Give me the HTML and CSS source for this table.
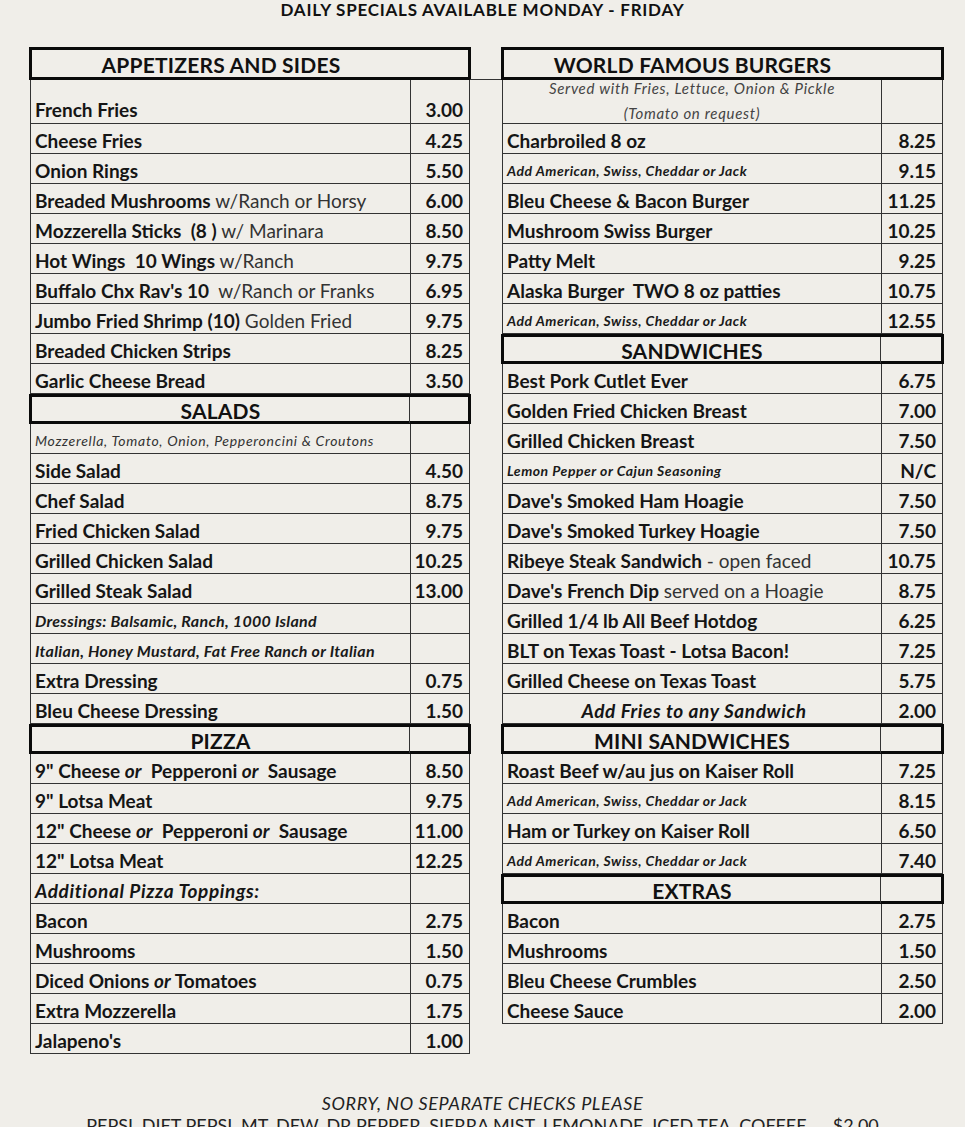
FILE: index.html
```html
<!DOCTYPE html>
<html>
<head>
<meta charset="utf-8">
<link rel="stylesheet" href="styles.css">
</head>
<body>
<div class="title">DAILY SPECIALS AVAILABLE MONDAY - FRIDAY</div>
<div class="menus">
  <div class="menu left">
    <div class="sec top"><div class="n">APPETIZERS AND SIDES</div></div>
    <div class="row tall"><div class="n"><b>French Fries</b></div><div class="p">3.00</div></div>
    <div class="row"><div class="n"><b>Cheese Fries</b></div><div class="p">4.25</div></div>
    <div class="row"><div class="n"><b>Onion Rings</b></div><div class="p">5.50</div></div>
    <div class="row"><div class="n"><b>Breaded Mushrooms</b>&nbsp;w/Ranch or Horsy</div><div class="p">6.00</div></div>
    <div class="row"><div class="n"><b>Mozzerella Sticks&nbsp; (8 )</b>&nbsp;w/ Marinara</div><div class="p">8.50</div></div>
    <div class="row"><div class="n"><b>Hot Wings&nbsp; 10 Wings</b>&nbsp;w/Ranch</div><div class="p">9.75</div></div>
    <div class="row"><div class="n"><b>Buffalo Chx Rav's 10</b>&nbsp; w/Ranch or Franks</div><div class="p">6.95</div></div>
    <div class="row"><div class="n"><b>Jumbo Fried Shrimp (10)</b>&nbsp;Golden Fried</div><div class="p">9.75</div></div>
    <div class="row"><div class="n"><b>Breaded Chicken Strips</b></div><div class="p">8.25</div></div>
    <div class="row"><div class="n"><b>Garlic Cheese Bread</b></div><div class="p">3.50</div></div>
    <div class="sec"><div class="n">SALADS</div><div class="p"></div></div>
    <div class="row"><div class="n desc">Mozzerella, Tomato, Onion, Pepperoncini &amp; Croutons</div><div class="p"></div></div>
    <div class="row"><div class="n"><b>Side Salad</b></div><div class="p">4.50</div></div>
    <div class="row"><div class="n"><b>Chef Salad</b></div><div class="p">8.75</div></div>
    <div class="row"><div class="n"><b>Fried Chicken Salad</b></div><div class="p">9.75</div></div>
    <div class="row"><div class="n"><b>Grilled Chicken Salad</b></div><div class="p">10.25</div></div>
    <div class="row"><div class="n"><b>Grilled Steak Salad</b></div><div class="p">13.00</div></div>
    <div class="row"><div class="n dress">Dressings: Balsamic, Ranch, 1000 Island</div><div class="p"></div></div>
    <div class="row"><div class="n dress">Italian, Honey Mustard, Fat Free Ranch or Italian</div><div class="p"></div></div>
    <div class="row"><div class="n"><b>Extra Dressing</b></div><div class="p">0.75</div></div>
    <div class="row"><div class="n"><b>Bleu Cheese Dressing</b></div><div class="p">1.50</div></div>
    <div class="sec"><div class="n">PIZZA</div><div class="p"></div></div>
    <div class="row"><div class="n"><b>9" Cheese <i>or</i>&nbsp; Pepperoni <i>or</i>&nbsp; Sausage</b></div><div class="p">8.50</div></div>
    <div class="row"><div class="n"><b>9" Lotsa Meat</b></div><div class="p">9.75</div></div>
    <div class="row"><div class="n"><b>12" Cheese <i>or</i>&nbsp; Pepperoni <i>or</i>&nbsp; Sausage</b></div><div class="p">11.00</div></div>
    <div class="row"><div class="n"><b>12" Lotsa Meat</b></div><div class="p">12.25</div></div>
    <div class="row"><div class="n bi">Additional Pizza Toppings:</div><div class="p"></div></div>
    <div class="row"><div class="n"><b>Bacon</b></div><div class="p">2.75</div></div>
    <div class="row"><div class="n"><b>Mushrooms</b></div><div class="p">1.50</div></div>
    <div class="row"><div class="n"><b>Diced Onions <i>or</i> Tomatoes</b></div><div class="p">0.75</div></div>
    <div class="row"><div class="n"><b>Extra Mozzerella</b></div><div class="p">1.75</div></div>
    <div class="row"><div class="n"><b>Jalapeno's</b></div><div class="p">1.00</div></div>
  </div>
  <div class="connector"></div>
  <div class="menu right">
    <div class="sec top"><div class="n">WORLD FAMOUS BURGERS</div></div>
    <div class="row tall"><div class="n served"><span class="served-text">Served with Fries, Lettuce, Onion &amp; Pickle<br>(Tomato on request)</span></div><div class="p"></div></div>
    <div class="row"><div class="n"><b>Charbroiled 8 oz</b></div><div class="p">8.25</div></div>
    <div class="row"><div class="n note">Add American, Swiss, Cheddar or Jack</div><div class="p">9.15</div></div>
    <div class="row"><div class="n"><b>Bleu Cheese &amp; Bacon Burger</b></div><div class="p">11.25</div></div>
    <div class="row"><div class="n"><b>Mushroom Swiss Burger</b></div><div class="p">10.25</div></div>
    <div class="row"><div class="n"><b>Patty Melt</b></div><div class="p">9.25</div></div>
    <div class="row"><div class="n"><b>Alaska Burger&nbsp; TWO 8 oz patties</b></div><div class="p">10.75</div></div>
    <div class="row"><div class="n note">Add American, Swiss, Cheddar or Jack</div><div class="p">12.55</div></div>
    <div class="sec"><div class="n">SANDWICHES</div><div class="p"></div></div>
    <div class="row"><div class="n"><b>Best Pork Cutlet Ever</b></div><div class="p">6.75</div></div>
    <div class="row"><div class="n"><b>Golden Fried Chicken Breast</b></div><div class="p">7.00</div></div>
    <div class="row"><div class="n"><b>Grilled Chicken Breast</b></div><div class="p">7.50</div></div>
    <div class="row"><div class="n note">Lemon Pepper or Cajun Seasoning</div><div class="p">N/C</div></div>
    <div class="row"><div class="n"><b>Dave's Smoked Ham Hoagie</b></div><div class="p">7.50</div></div>
    <div class="row"><div class="n"><b>Dave's Smoked Turkey Hoagie</b></div><div class="p">7.50</div></div>
    <div class="row"><div class="n"><b>Ribeye Steak Sandwich</b>&nbsp;- open faced</div><div class="p">10.75</div></div>
    <div class="row"><div class="n"><b>Dave's French Dip</b>&nbsp;served on a Hoagie</div><div class="p">8.75</div></div>
    <div class="row"><div class="n"><b>Grilled 1/4 lb All Beef Hotdog</b></div><div class="p">6.25</div></div>
    <div class="row"><div class="n"><b>BLT on Texas Toast - Lotsa Bacon!</b></div><div class="p">7.25</div></div>
    <div class="row"><div class="n"><b>Grilled Cheese on Texas Toast</b></div><div class="p">5.75</div></div>
    <div class="row"><div class="n bi center">Add Fries to any Sandwich</div><div class="p">2.00</div></div>
    <div class="sec"><div class="n">MINI SANDWICHES</div><div class="p"></div></div>
    <div class="row"><div class="n"><b>Roast Beef w/au jus on Kaiser Roll</b></div><div class="p">7.25</div></div>
    <div class="row"><div class="n note">Add American, Swiss, Cheddar or Jack</div><div class="p">8.15</div></div>
    <div class="row"><div class="n"><b>Ham or Turkey on Kaiser Roll</b></div><div class="p">6.50</div></div>
    <div class="row"><div class="n note">Add American, Swiss, Cheddar or Jack</div><div class="p">7.40</div></div>
    <div class="sec"><div class="n">EXTRAS</div><div class="p"></div></div>
    <div class="row"><div class="n"><b>Bacon</b></div><div class="p">2.75</div></div>
    <div class="row"><div class="n"><b>Mushrooms</b></div><div class="p">1.50</div></div>
    <div class="row"><div class="n"><b>Bleu Cheese Crumbles</b></div><div class="p">2.50</div></div>
    <div class="row"><div class="n"><b>Cheese Sauce</b></div><div class="p">2.00</div></div>
  </div>
</div>
<div class="footer">
  <div class="sorry">SORRY, NO SEPARATE CHECKS PLEASE</div>
  <div class="drinks">PEPSI, DIET PEPSI, MT. DEW, DR PEPPER, SIERRA MIST, LEMONADE, ICED TEA, COFFEE .... $2.00</div>
</div>
</body>
</html>
```
FILE: styles.css
```css
* { box-sizing: border-box; }
html, body { height: 100%; }
body {
  margin: 0;
  background: #f0eee9;
  color: #1a1a1a;
  font-family: Lato, "Open Sans", sans-serif;
  overflow: hidden;
}
.title {
  height: 47px;
  text-align: center;
  font-weight: 700;
  font-size: 17px;
  letter-spacing: 0.75px;
  line-height: 20px;
  color: #111;
}
.menus {
  display: flex;
  align-items: flex-start;
  padding-left: 30px;
}
.menu.left { width: 440px; flex: none; }
.menu.right { width: 441px; flex: none; }
.connector {
  width: 32px;
  height: 33px;
  flex: none;
  border-bottom: 1px solid #333;
}
.row {
  display: grid;
  grid-template-columns: 1fr 58px;
  height: 30px;
  border-left: 1px solid #333;
  border-right: 1px solid #333;
  border-bottom: 1px solid #333;
  font-size: 19px;
}
.right .row { grid-template-columns: 1fr 60px; }
.row.tall { height: 44px; }
.row .n {
  display: flex;
  align-items: center;
  padding: 3px 0 0 4px;
  white-space: nowrap;
  border-right: 1px solid #333;
  color: #333;
}
.row .n b { color: #151515; }
.row.tall .n { align-items: flex-end; padding-bottom: 2px; }
.row .p {
  display: flex;
  align-items: center;
  justify-content: flex-end;
  padding: 3px 6px 0 0;
  font-weight: 700;
  color: #151515;
}
.row.tall .p { align-items: flex-end; padding-bottom: 2px; }
.n.desc {
  font-style: italic;
  font-size: 14px;
  letter-spacing: 0.7px;
  color: #333;
}
.n.dress {
  font-style: italic;
  font-weight: 700;
  font-size: 16px;
  letter-spacing: 0.3px;
  color: #1a1a1a;
}
.n.note {
  font-style: italic;
  font-weight: 700;
  font-size: 14px;
  letter-spacing: 0.5px;
  color: #1a1a1a;
}
.n.bi {
  font-style: italic;
  font-weight: 700;
  letter-spacing: 0.6px;
  color: #151515;
}
.n.center { justify-content: center; }
.row.tall .n.served {
  justify-content: center;
  align-items: flex-start;
  padding: 0;
}
.served-text {
  display: block;
  margin-top: -4px;
  text-align: center;
  font-style: italic;
  font-size: 15px;
  letter-spacing: 0.7px;
  line-height: 25px;
  color: #444;
}
.sec {
  display: grid;
  grid-template-columns: 1fr 58px;
  height: 30px;
  margin: 0 -1px;
  border: 3px solid #0a0a0a;
  font-size: 21px;
  font-weight: 700;
  letter-spacing: 0.2px;
  color: #111;
}
.right .sec { grid-template-columns: 1fr 60px; }
.sec .n {
  display: flex;
  align-items: center;
  justify-content: center;
  border-right: 1px solid #333;
  padding-top: 1px;
}
.sec.top { height: 33px; }
.sec.top .n { border-right: none; }
.footer {
  margin-top: 38px;
  text-align: center;
}
.sorry {
  font-style: italic;
  font-size: 18px;
  letter-spacing: 0.6px;
  line-height: 22px;
  color: #222;
}
.drinks {
  font-size: 18px;
  line-height: 22px;
  white-space: nowrap;
  color: #222;
}
```
